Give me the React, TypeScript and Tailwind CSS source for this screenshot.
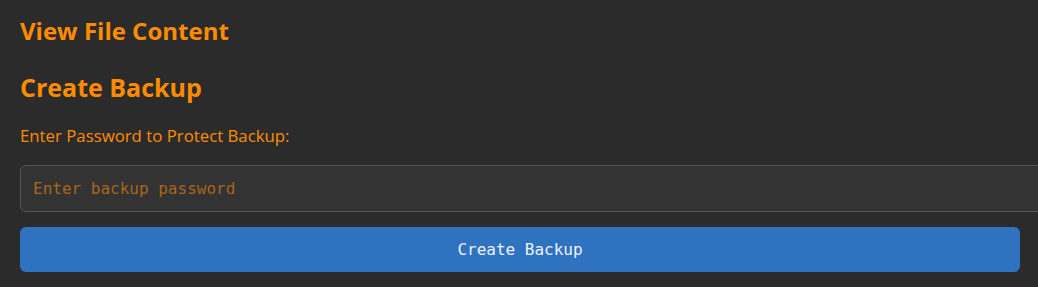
import React from "react";

export default function App() {
  return (
    <div className="min-h-[287px] w-full bg-[#2b2b2b] px-5 pt-[13px] text-[#ff8c00]" style={{ fontFamily: '"Open Sans", sans-serif' }}>
      <div className="w-[1000px]">
        <h2 className="text-[24px] font-bold leading-[36px]">View File Content</h2>
        <h2 className="mt-[20px] text-[25px] font-bold leading-[36px]">Create Backup</h2>
        <label className="mt-[19px] block text-[16.8px] leading-[24px]">Enter Password to Protect Backup:</label>
        <input
          type="password"
          placeholder="Enter backup password"
          className="mt-[17px] box-content block w-full rounded-md border border-[#555555] bg-[#333333] px-3 py-3 text-[16px] leading-[21px] text-[#ff8c00] outline-none placeholder:text-[#a8651c]"
          style={{ fontFamily: '"DejaVu Sans Mono", monospace' }}
        />
        <button
          className="mt-[15px] block h-[45px] w-full rounded-md bg-[#2f72bf] text-[16px] text-[#eef2f8]"
          style={{ fontFamily: '"DejaVu Sans Mono", monospace' }}
        >
          Create Backup
        </button>
      </div>
    </div>
  );
}
